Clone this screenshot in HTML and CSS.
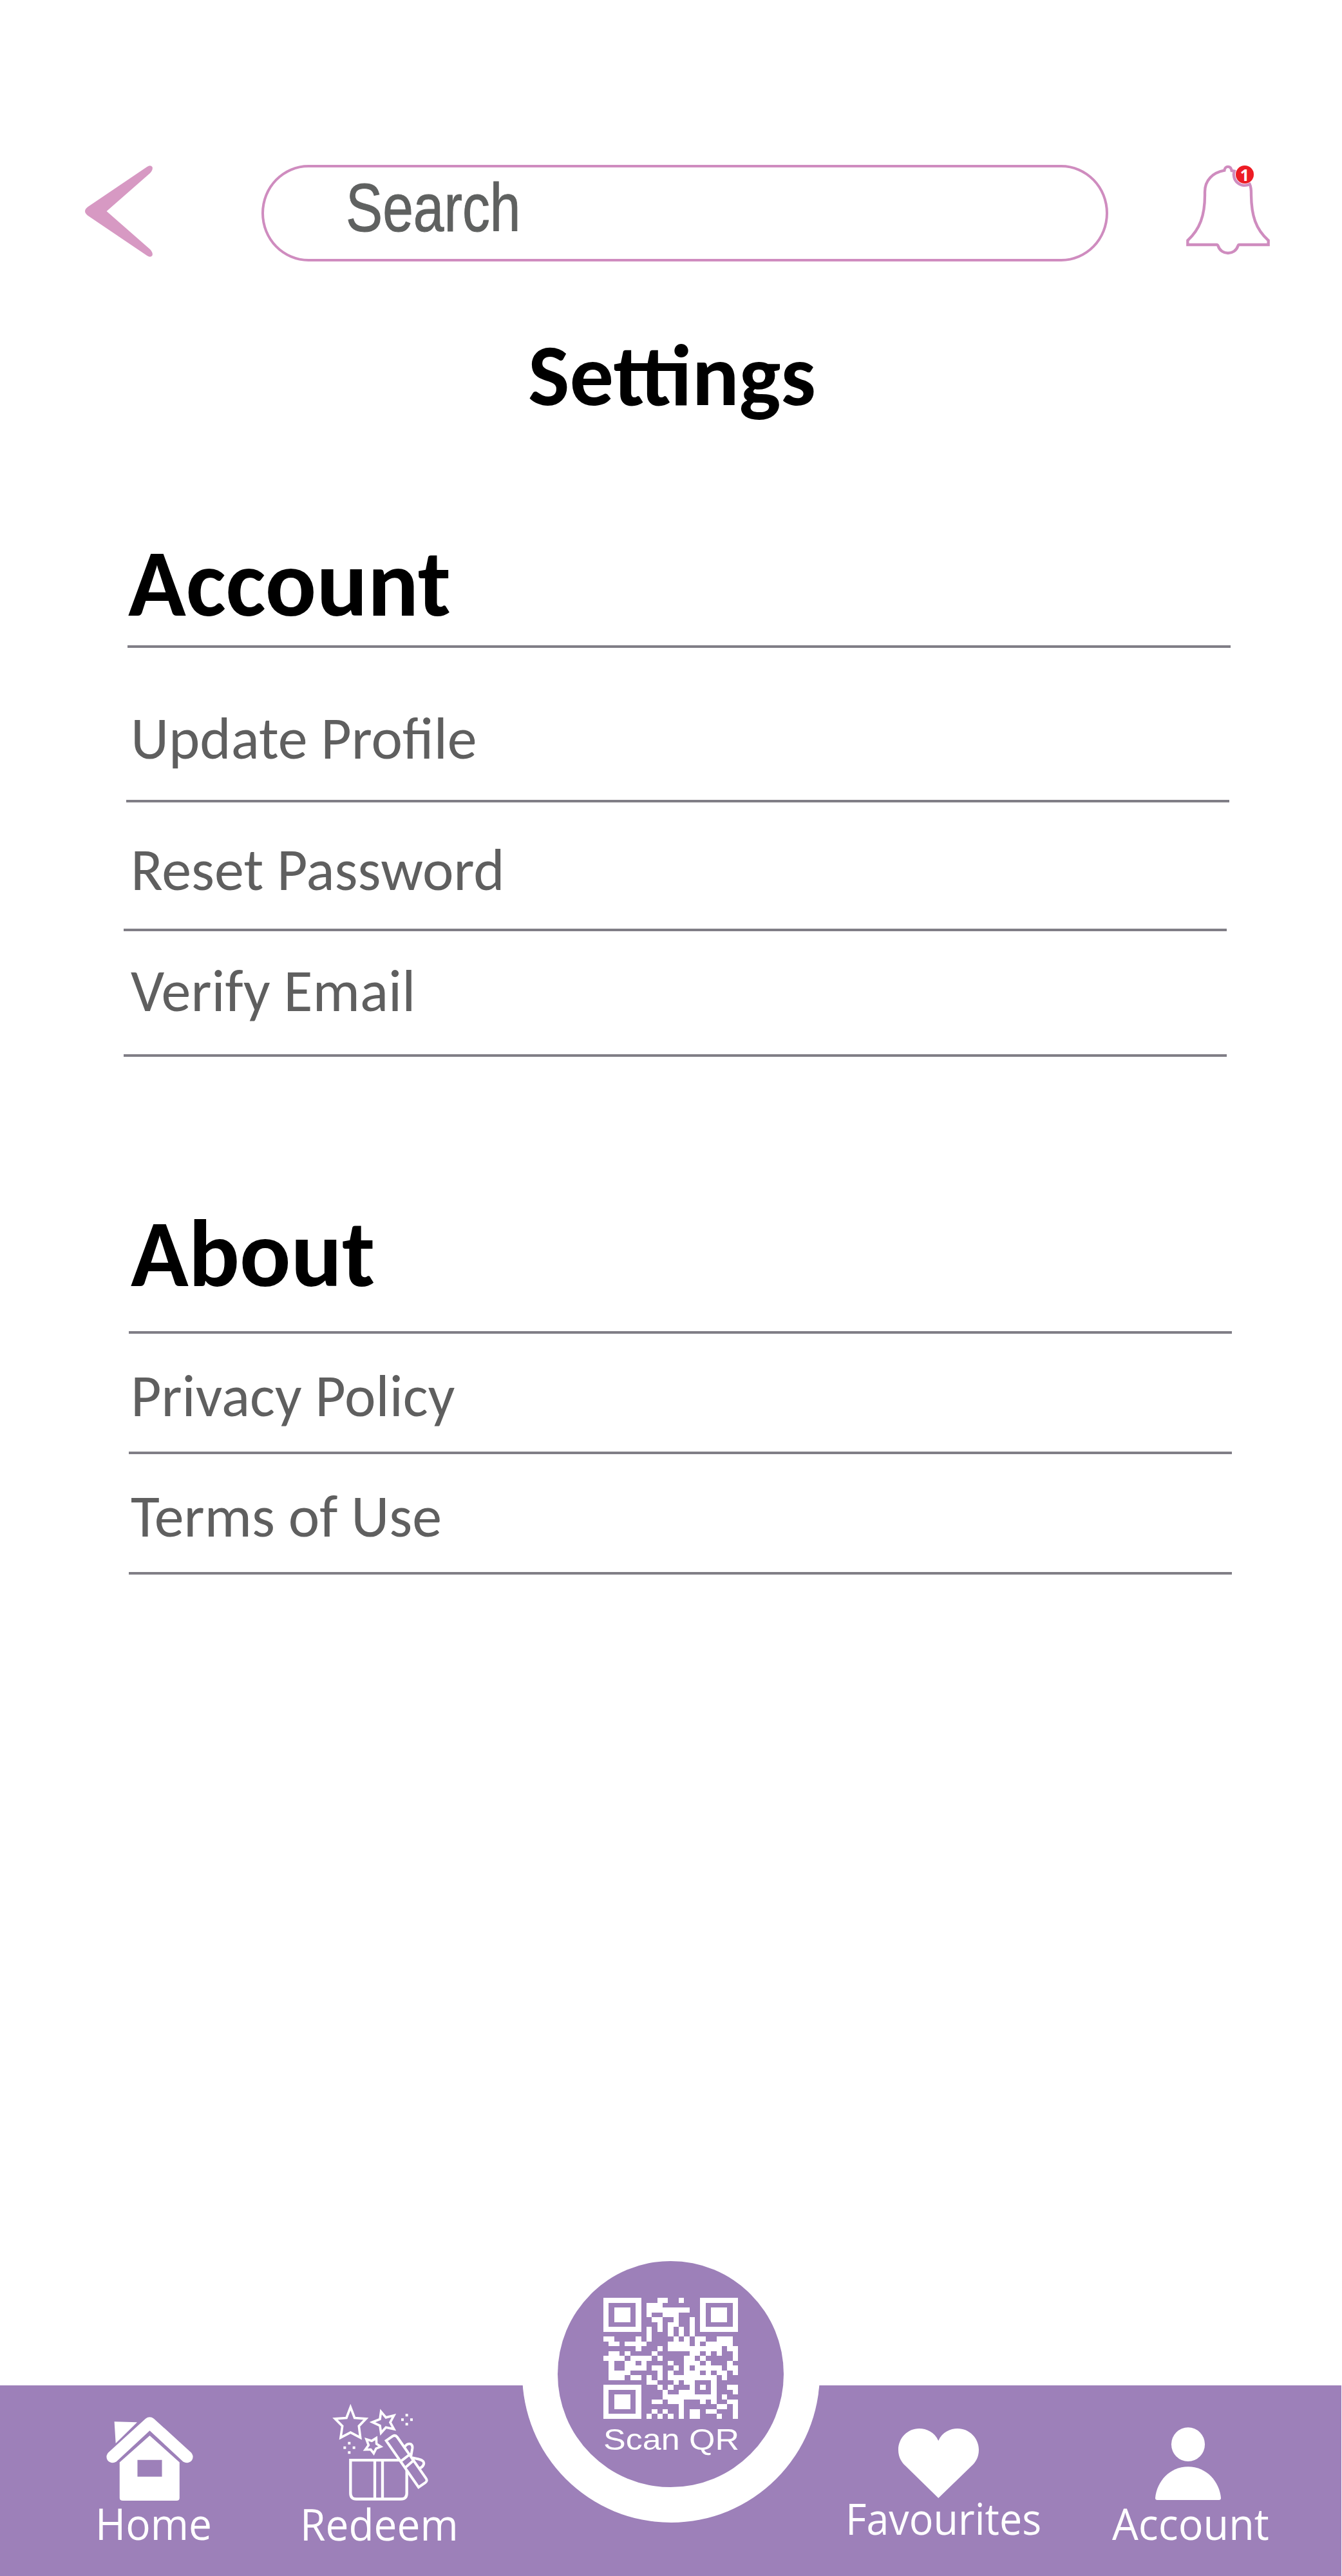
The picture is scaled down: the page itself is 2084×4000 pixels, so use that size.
FILE: index.html
```html
<!DOCTYPE html>
<html lang="en">
<head>
<meta charset="utf-8">
<title>Settings</title>
<link rel="stylesheet" href="styles.css">
</head>
<body>
<div class="screen">
  <header class="topbar">
    <a class="back" aria-label="Back">
      <svg viewBox="67 112 219 426" preserveAspectRatio="none"><path fill="#d799c3" d="M268 118Q279 107 285 119Q288 131 278 147L137 325L278 503Q288 519 285 531Q279 543 268 532L76 345Q58 325 76 305Z"/></svg>
    </a>
    <div class="search"><span class="search-text">Search</span></div>
    <a class="bell" aria-label="Notifications">
      <svg viewBox="570 100 400 440"><path fill="none" stroke="#cf8cbf" stroke-width="13" d="M583 481V461C640 408 663 345 663 250V235C663 180 700 145 754 135C757 112 784 112 788 136L800 138A51 51 0 0 0 872 199C880 215 879 235 879 250C880 345 900 408 959 461V481H824Q819 481 817 487C803 531 739 531 725 487Q723 481 718 481Z"/></svg>
      <span class="badge">1</span>
    </a>
  </header>

  <h1 class="title">Settings</h1>

  <section class="group account">
    <h2 class="heading">Account</h2>
    <div class="row profile">Update Profile</div>
    <div class="row password">Reset Password</div>
    <div class="row email">Verify Email</div>
  </section>

  <section class="group about">
    <h2 class="heading">About</h2>
    <div class="row">Privacy Policy</div>
    <div class="row">Terms of Use</div>
  </section>

  <nav class="tabs">
    <a class="tab home">
      <svg viewBox="150 218 312 391" preserveAspectRatio="none" fill="#fff"><path d="M179 240L261 243L184 341Z"/><path d="M291 226Q306 211 321 226L455 385Q466 403 457 421Q443 440 426 427L306 282L186 427Q169 440 155 421Q146 403 157 385Z"/><path fill-rule="evenodd" d="M306 305L413 430V596Q413 609 402 609H210Q198 609 198 596V430ZM262 419H350V497H262Z"/></svg>
      <span class="label">Home</span>
    </a>
    <a class="tab redeem">
      <svg viewBox="77 70 450 449" fill="none" stroke="#fff" stroke-width="11" stroke-miterlimit="10">
        <path d="M165 84L184 134L237 138L204 172L211 226L165 202L119 226L127 172L93 138L146 134Z"/>
        <path d="M307 105L330 132L367 123L350 155L367 186L330 178L307 204L302 170L267 154L302 140Z"/>
        <path d="M239 234L264 241L285 228L286 255L306 268L284 277L273 299L259 281L234 282L249 261Z"/>
        <g fill="#fff" stroke="none"><path d="M421 115h12v12h-12zM401 136h12v12h-12zM443 136h12v12h-12zM421 157h12v12h-12zM153 246h12v12h-12zM132 267h12v12h-12zM175 267h12v12h-12zM153 289h12v12h-12z"/></g>
        <path stroke-width="13" d="M396 331H165V485Q165 512 192 512H400Q427 512 427 485V376M278 331V512M314 331V512"/>
        <path stroke-width="12" d="M331 240L360 220Q373 211 383 224L516 415Q525 427 513 436L482 457ZM399 336L440 305M420 366L458 333M417 270Q429 250 446 256Q455 261 453 276L446 316M440 305L458 333M450 319L482 326Q511 333 506 350Q501 364 484 370"/>
      </svg>
      <span class="label">Redeem</span>
    </a>
    <a class="tab favourites">
      <svg viewBox="273 273 235 325" preserveAspectRatio="none" fill="#fff"><path d="M390 330C379 290 355 273 334 273C300 273 273 318 273 372C273 405 281 428 293 446L390 598L488 446C500 428 508 405 508 372C508 318 480 273 446 273C425 273 401 290 390 330Z"/></svg>
      <span class="label">Favourites</span>
    </a>
    <a class="tab profile-tab">
      <svg viewBox="1023 266 192 340" preserveAspectRatio="none" fill="#fff"><ellipse cx="1119" cy="346" rx="49" ry="79.5"/><path d="M1023 597C1027 520 1065 450 1119 450C1173 450 1211 520 1215 597Q1215 606 1209 606H1029Q1023 606 1023 597Z"/></svg>
      <span class="label">Account</span>
    </a>
    <a class="scan">
      <span class="scan-disc">
        <svg viewBox="0 0 25 25" preserveAspectRatio="none" shape-rendering="crispEdges" fill="none" stroke="#fff"><path transform="translate(0 .5)" d="M0 0h7M10 0h2M14 0h1M18 0h7
M0 1h1M6 1h1M8 1h3M18 1h1M24 1h1
M0 2h1M2 2h3M6 2h1M8 2h8M18 2h1M20 2h3M24 2h1
M0 3h1M2 3h3M6 3h1M8 3h1M11 3h3M18 3h1M20 3h3M24 3h1
M0 4h1M2 4h3M6 4h1M9 4h2M13 4h1M16 4h1M18 4h1M20 4h3M24 4h1
M0 5h1M6 5h1M10 5h1M12 5h2M16 5h1M18 5h1M24 5h1
M0 6h7M8 6h1M10 6h1M12 6h1M14 6h1M16 6h1M18 6h7
M8 7h1M12 7h1M14 7h1M16 7h1
M0 8h2M6 8h1M8 8h1M13 8h1M15 8h1M17 8h2M21 8h3
M1 9h2M4 9h4M12 9h4M17 9h1M19 9h5
M6 10h1M10 10h1M12 10h10M23 10h2
M1 11h2M4 11h1M9 11h1M16 11h2M19 11h1M21 11h1M24 11h1
M0 12h4M5 12h4M10 12h1M15 12h2M18 12h1M24 12h1
M1 13h1M4 13h2M7 13h1M12 13h1M15 13h3M19 13h1M23 13h1
M1 14h1M4 14h4M9 14h2M13 14h1M15 14h1M17 14h5M23 14h2
M1 15h4M10 15h1M12 15h1M15 15h3M19 15h1M21 15h2M24 15h1
M1 16h3M5 16h2M8 16h1M10 16h1M12 16h9M22 16h1
M8 17h2M13 17h1M15 17h2M20 17h1
M0 18h7M10 18h1M12 18h1M16 18h1M18 18h1M20 18h1M23 18h2
M0 19h1M6 19h1M11 19h1M14 19h3M20 19h1M24 19h1
M0 20h1M2 20h3M6 20h1M11 20h10M22 20h1
M0 21h1M2 21h3M6 21h1M9 21h2M12 21h3M18 21h1M20 21h1M23 21h2
M0 22h1M2 22h3M6 22h1M14 22h1M21 22h2M24 22h1
M0 23h1M6 23h1M9 23h1M11 23h1M14 23h1M16 23h2M19 23h2M24 23h1
M0 24h7M8 24h1M10 24h1M12 24h1M14 24h1M16 24h2M21 24h1M24 24h1"/></svg>
        <span class="scan-label">Scan QR</span>
      </span>
    </a>
  </nav>
</div>
</body>
</html>
```
FILE: styles.css
```css
* { box-sizing: border-box; }
body { margin: 0; background: #fff; }
svg { display: block; }

.screen {
  width: 2084px;
  height: 4000px;
  display: flex;
  flex-direction: column;
  overflow: hidden;
  background: #fff;
  font-family: Carlito, Calibri, Lato, sans-serif;
}

/* Top bar */
.topbar {
  display: flex;
  height: 406px;
  padding: 256px 0 0 132px;
  align-items: flex-start;
}
.back { width: 105px; margin-top: 1px; }
.back svg { width: 105px; height: 142px; }
.search {
  width: 1315px;
  height: 150px;
  margin-left: 169px;
  padding-left: 127px;
  border: 4px solid #cf8cbf;
  border-radius: 73px / 75px;
}
.search-text {
  display: inline-block;
  font: 105px/120px "Liberation Sans", Arial, sans-serif;
  color: #5f6160;
  -webkit-text-stroke: 1px #5f6160;
  transform: scaleX(.816);
  transform-origin: 0 0;
  margin-top: 3px;
}
.bell { position: relative; margin: -3px 0 0 119px; }
.bell svg { width: 133.33px; height: 146.67px; }
.badge {
  position: absolute;
  left: 79px;
  top: 4px;
  width: 28px;
  height: 28px;
  border-radius: 50%;
  background: #ed1c24;
  color: #fff;
  font: 700 25px/28px "Noto Sans", sans-serif;
  text-align: center;
}

/* Content */
.title {
  margin: 94px 0 0;
  padding-left: 3px;
  font-size: 136.5px;
  line-height: 166px;
  font-weight: 700;
  text-align: center;
  color: #000;
}
.heading {
  width: 1713px;
  margin: 0 0 0 198px;
  padding: 0 0 6px 1px;
  border-bottom: 4px solid #807e86;
  font-size: 148px;
  line-height: 181px;
  font-weight: 700;
  color: #000;
}
.row {
  width: 1713px;
  margin-left: 200px;
  padding: 41px 0 30px 3px;
  border-bottom: 4px solid #807e86;
  font-size: 92px;
  line-height: 112px;
  color: #5f5f5f;
}
.account { margin-top: 149px; }
.profile { margin-left: 196px; padding: 85px 0 39px 7px; }
.password { margin-left: 192px; padding: 49px 0 35px 11px; }
.email { margin-left: 192px; padding: 37px 0 42px 11px; }
.about { margin-top: 215px; }
.about .heading { margin-left: 200px; padding: 0 0 30px 3px; }

/* Bottom navigation */
.tabs {
  position: relative;
  display: flex;
  align-items: flex-start;
  width: 2083px;
  height: 296px;
  margin-top: auto;
  background: #9d80b9;
  color: #fff;
}
.tab { display: flex; flex-direction: column; }
.label {
  font: 67px/80px "Open Sans", "Noto Sans", sans-serif;
  white-space: nowrap;
  transform: scaleX(.955);
  transform-origin: 0 0;
}
.home { width: 190px; margin-left: 148px; padding-top: 49px; }
.home svg { width: 135px; height: 130px; margin: 0 0 -5px 17px; }
.redeem { width: 250px; margin-left: 128px; padding-top: 29px; }
.redeem svg { width: 150px; height: 150px; margin: 0 0 -4px 49px; }
.favourites { width: 310px; margin-left: 597px; padding-top: 67px; }
.favourites svg { width: 125px; height: 108px; margin: 0 0 -9px 82px; }
.favourites .label { transform: scaleX(.9375); }
.profile-tab { width: 250px; margin-left: 104px; padding-top: 65px; }
.profile-tab svg { width: 102px; height: 113px; margin: 0 0 -4px 67px; }
.profile-tab .label { transform: scaleX(.964); }

/* Raised scan button, overlapping the bar */
.scan {
  position: absolute;
  left: 811px;
  top: -249px;
  width: 462px;
  height: 462px;
  padding: 56px 0 0 55px;
  border-radius: 50%;
  background: #fff;
}
.scan-disc {
  display: block;
  width: 351px;
  height: 351px;
  padding: 57px 0 0 71px;
  border-radius: 50%;
  background: #9d80b9;
}
.scan-disc svg { width: 209px; height: 188px; }
.scan-label {
  display: block;
  width: 186px;
  font: 45.7px/52px "Liberation Sans", Arial, sans-serif;
  white-space: nowrap;
  transform: scaleX(1.139);
  transform-origin: 0 0;
  margin-top: 7px;
}
```
